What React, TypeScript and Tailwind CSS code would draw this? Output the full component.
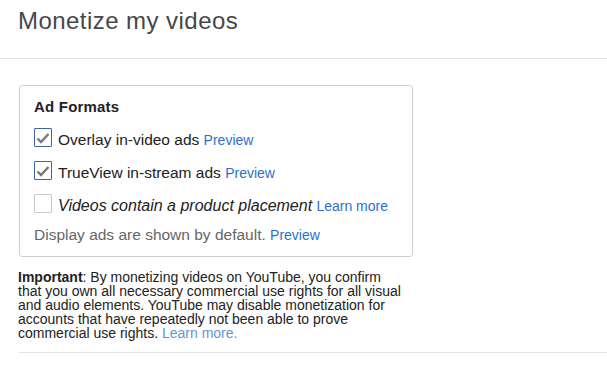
import type { ReactNode } from 'react';

const font = { fontFamily: '"Liberation Sans", Arial, sans-serif' };

function Checkbox({ checked }: { checked: boolean }) {
  return (
    <span
      className={
        checked
          ? 'flex h-[19px] w-[18px] shrink-0 items-center justify-center rounded-[1px] border border-[#3d65a4] bg-white'
          : 'flex h-[19px] w-[18px] shrink-0 items-center justify-center rounded-[1px] border border-[#c9c9c9] bg-white'
      }
    >
      {checked && (
        <svg width="14" height="12" viewBox="0 0 14 12" fill="none">
          <path d="M1.5 6.5 L5 10 L12.5 2" stroke="#787878" strokeWidth="2.4" />
        </svg>
      )}
    </span>
  );
}

function Row({ checked, children }: { checked: boolean; children: ReactNode }) {
  return (
    <div className="flex h-[33px] items-start">
      <div className="mt-[7px]">
        <Checkbox checked={checked} />
      </div>
      <div className="ml-[6px] mt-[9px] whitespace-nowrap text-[15.5px] leading-[20px] text-[#222]">
        {children}
      </div>
    </div>
  );
}

function Link({ children }: { children: ReactNode }) {
  return <span className="text-[14px] text-[#2c6fce]">{children}</span>;
}

export default function App() {
  return (
    <div className="min-h-[387px] w-[607px] bg-white" style={font}>
      <div className="border-b border-[#e3e3e3] pb-[23px] pl-[18px] pt-[7px]">
        <h1 className="text-[24px] leading-[28px] tracking-[0.45px] text-[#474747]">Monetize my videos</h1>
      </div>

      <div className="ml-[19px] mt-[26px] w-[394px] rounded-[3px] border border-[#cfcfcf] px-[14px] pb-[11px] pt-[11px]">
        <div className="text-[15px] font-bold leading-[20px] tracking-[0.2px] text-[#222]">Ad Formats</div>
        <div className="mt-[4px]">
          <Row checked>
            Overlay in-video ads <Link>Preview</Link>
          </Row>
          <Row checked>
            TrueView in-stream ads <Link>Preview</Link>
          </Row>
          <Row checked={false}>
            <span className="text-[16px] italic">Videos contain a product placement</span> <Link>Learn more</Link>
          </Row>
        </div>
        <div className="mt-[5px] whitespace-nowrap text-[15.5px] leading-[20px] text-[#666]">
          Display ads are shown by default. <Link>Preview</Link>
        </div>
      </div>

      <div className="ml-[18px] mt-[13px] whitespace-nowrap text-[14px] leading-[14px] text-[#222]">
        <span className="font-bold">Important</span>: By monetizing videos on YouTube, you confirm
        <br />
        that you own all necessary commercial use rights for all visual
        <br />
        and audio elements. YouTube may disable monetization for
        <br />
        accounts that have repeatedly not been able to prove
        <br />
        commercial use rights. <span className="text-[#5f95d7]">Learn more.</span>
      </div>

      <div className="ml-[19px] mt-[12px] border-t border-[#e3e3e3]" />
    </div>
  );
}
